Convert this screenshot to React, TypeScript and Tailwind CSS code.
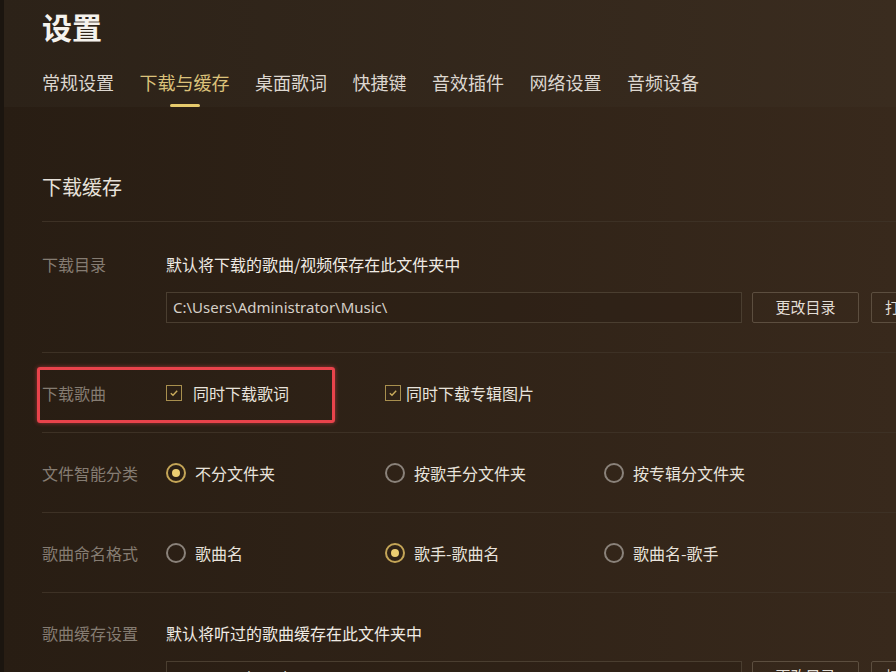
const tabs = ["常规设置", "下载与缓存", "桌面歌词", "快捷键", "音效插件", "网络设置", "音频设备"];

const Checkbox = ({ label, tight }: { label: string; tight?: boolean }) => (
  <div className={`flex items-center w-[219px] shrink-0 ${tight ? "gap-[5px]" : "gap-[11px]"}`}>
    <span className="w-[16px] h-[16px] border-[1.5px] border-[#a88f4e] flex items-center justify-center">
      <svg width="12" height="12" viewBox="0 0 12 12" fill="none">
        <path d="M2.8 6.2 L5 8.3 L9.2 3.8" stroke="#c9ab5c" strokeWidth="1.4" />
      </svg>
    </span>
    <span className="text-[16px] text-[#e8e3dc]">{label}</span>
  </div>
);

const Radio = ({ label, checked }: { label: string; checked?: boolean }) => (
  <div className="flex items-center gap-[9px] w-[219px] shrink-0">
    <span
      className={`w-[20px] h-[20px] rounded-full border-2 flex items-center justify-center ${
        checked ? "border-[#c4a557]" : "border-[#8a827a]"
      }`}
    >
      {checked && <span className="w-[8px] h-[8px] rounded-full bg-[#ecce72]" />}
    </span>
    <span className="text-[16px] text-[#e8e3dc]">{label}</span>
  </div>
);

const Label = ({ text }: { text: string }) => (
  <span className="w-[124px] shrink-0 text-[16px] leading-[24px] text-[#857c72] whitespace-nowrap">{text}</span>
);

const PathRow = ({ path }: { path: string }) => (
  <div className="flex items-center h-[31px]">
    <div className="w-[576px] shrink-0 h-full border border-[#4a3e30] bg-[#2a1f15]/40 flex items-center px-[6px]">
      <span className="font-['Noto_Sans',sans-serif] text-[15px] text-[#d6d0c8]">{path}</span>
    </div>
    <button className="ml-[10px] w-[107px] shrink-0 h-full border border-[#5c4e3f] rounded-[2px] text-[15px] text-[#e2ddd5]">
      更改目录
    </button>
    <button className="ml-[12px] w-[107px] shrink-0 h-full border border-[#5c4e3f] rounded-[2px] text-[15px] text-[#e2ddd5] whitespace-nowrap pr-[4px]">
      打开文件夹
    </button>
  </div>
);

export default function App() {
  return (
    <div className="w-[896px] h-[672px] overflow-hidden flex font-['Noto_Sans_CJK_SC',sans-serif]">
      <div className="w-[4px] shrink-0 bg-[#1b150f]" />
      <div className="flex-1 min-w-0 flex flex-col">
        <div className="h-[107px] shrink-0 bg-linear-to-r from-[#2c2218] to-[#3a2c1f] px-[38px] flex flex-col">
          <h1 className="mt-[6px] h-[40px] leading-[40px] text-[30px] font-bold text-[#f5f2ed]">设置</h1>
          <div className="mt-[24px] flex gap-[25.5px]">
            {tabs.map((t, i) => (
              <div key={t} className="flex flex-col items-center">
                <span
                  className={`text-[18px] leading-[24px] whitespace-nowrap ${
                    i === 1 ? "text-[#dcc27a]" : "text-[#ddd7d0]"
                  }`}
                >
                  {t}
                </span>
                <span className={`mt-[10px] w-[30px] h-[3px] rounded-full ${i === 1 ? "bg-[#e6ca6c]" : ""}`} />
              </div>
            ))}
          </div>
        </div>

        <div className="flex-1 bg-linear-to-r from-[#281d13] to-[#38291c] pl-[38px]">
          <h2 className="pt-[66px] leading-[28px] text-[20px] text-[#e6e1da]">下载缓存</h2>
          <div className="mt-[20px] border-t border-[#3d3125]" />

          <div className="pt-[30px] pb-[29px] flex border-b border-[#3d3125]">
            <Label text="下载目录" />
            <div className="flex flex-col gap-[16px] shrink-0">
              <span className="leading-[24px] text-[16px] text-[#f0ebe4]">默认将下载的歌曲/视频保存在此文件夹中</span>
              <PathRow path="C:\Users\Administrator\Music\" />
            </div>
          </div>

          <div className="relative h-[80px] flex items-center border-b border-[#3d3125]">
            <Label text="下载歌曲" />
            <Checkbox label="同时下载歌词" />
            <Checkbox label="同时下载专辑图片" tight />
            <div className="absolute left-[-5px] top-[14px] w-[298px] h-[56px] border-[3px] border-[#e8434b] rounded-[3px] shadow-[0_0_4px_rgba(232,67,75,0.6)]" />
          </div>

          <div className="h-[80px] flex items-center border-b border-[#3d3125]">
            <Label text="文件智能分类" />
            <Radio label="不分文件夹" checked />
            <Radio label="按歌手分文件夹" />
            <Radio label="按专辑分文件夹" />
          </div>

          <div className="h-[80px] flex items-center border-b border-[#3d3125]">
            <Label text="歌曲命名格式" />
            <Radio label="歌曲名" />
            <Radio label="歌手-歌曲名" checked />
            <Radio label="歌曲名-歌手" />
          </div>

          <div className="pt-[28px] flex">
            <Label text="歌曲缓存设置" />
            <div className="flex flex-col gap-[16px] shrink-0">
              <span className="leading-[24px] text-[16px] text-[#f0ebe4]">默认将听过的歌曲缓存在此文件夹中</span>
              <PathRow path="D:\QQMusicCache\" />
            </div>
          </div>
        </div>
      </div>
    </div>
  );
}
